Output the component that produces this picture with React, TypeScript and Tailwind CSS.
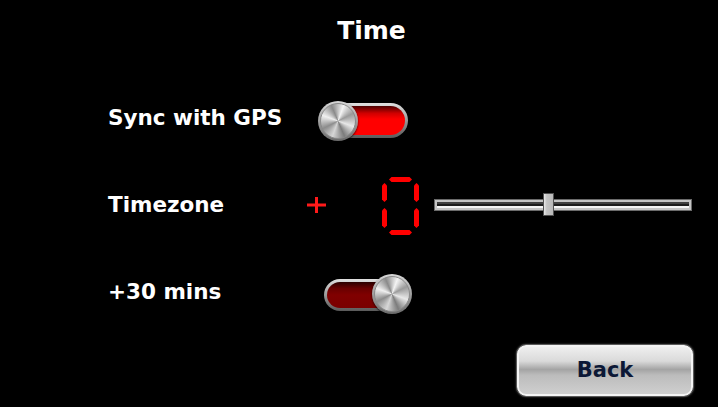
import type React from "react"

const Knob: React.FC = () => (
  <div className="w-[40px] h-[40px] rounded-full p-[2px] bg-[linear-gradient(180deg,#d8d8d8,#6a6a6a)] shadow-[0_1px_2px_rgba(0,0,0,0.8)] shrink-0">
    <div className="w-full h-full rounded-full border border-[#8a8a8a] bg-[conic-gradient(from_20deg,#f4f4f4,#9a9a9a_12%,#e8e8e8_25%,#7c7c7c_38%,#d6d6d6_50%,#8c8c8c_62%,#f0f0f0_75%,#8a8a8a_88%,#f4f4f4)]" />
  </div>
)

const Toggle: React.FC<{ on: boolean }> = ({ on }) => (
  <div className="relative w-[94px] h-[44px] flex items-center mt-[5px]">
    <div
      className={
        on
          ? "ml-[2px] w-[88px] h-[35px] rounded-full p-[3px] bg-[linear-gradient(180deg,#e0e0e0,#8c8c8c_60%,#5a5a5a)]"
          : "ml-[6px] w-[86px] h-[32px] rounded-full p-[3px] bg-[linear-gradient(180deg,#e0e0e0,#8c8c8c_60%,#5a5a5a)]"
      }
    >
      <div
        className={
          on
            ? "w-full h-full rounded-full bg-[linear-gradient(180deg,#4a0000,#d00000_25%,#ff0000_45%,#ff0000)]"
            : "w-full h-full rounded-full bg-[linear-gradient(180deg,#2a0000,#6a0000_25%,#800000_50%,#7a0000)]"
        }
      />
    </div>
    <div className={on ? "absolute left-0 top-[2px]" : "absolute left-[54px] top-[1px]"}>
      <Knob />
    </div>
  </div>
)

const Plus: React.FC = () => (
  <svg width="19" height="16" viewBox="0 0 19 16" className="shrink-0">
    <rect x="0" y="6.5" width="19" height="3" fill="#ff1a1a" />
    <rect x="8" y="0" width="3" height="16" fill="#ff1a1a" />
  </svg>
)

const Digit0: React.FC = () => {
  const h = (y: number) => `7,${y + 2.5} 9.5,${y} 27.5,${y} 30,${y + 2.5} 27.5,${y + 5} 9.5,${y + 5}`
  const v = (x: number, y1: number, y2: number) =>
    `${x + 2.5},${y1} ${x + 5},${y1 + 2.5} ${x + 5},${y2 - 2.5} ${x + 2.5},${y2} ${x},${y2 - 2.5} ${x},${y1 + 2.5}`
  return (
    <svg width="37" height="58" viewBox="0 0 37 58" className="shrink-0">
      <g fill="#ff0000">
        <polygon points={h(0)} />
        <polygon points={h(53)} />
        <polygon points={v(0, 6, 25)} />
        <polygon points={v(0, 31, 51)} />
        <polygon points={v(32, 6, 25)} />
        <polygon points={v(32, 31, 51)} />
      </g>
    </svg>
  )
}

const Slider: React.FC = () => (
  <div className="relative w-[258px] h-[24px] flex items-center">
    <div className="w-full h-[12px] border border-[#6a6a6a] bg-[#c4c4c4] px-[2px] py-[2px]">
      <div className="w-full h-full border-t-2 border-[#404040] bg-[#1c1c1c] border-b-2 border-b-[#f4f4f4]" />
    </div>
    <div className="absolute left-[109px] top-[0px] w-[11px] h-[23px] border border-[#505050] bg-[linear-gradient(90deg,#e8e8e8,#c4c4c4_30%,#b8b8b8)]" />
  </div>
)

export default function App() {
  return (
    <div
      className="w-[718px] h-[407px] bg-black text-white font-bold overflow-hidden"
      style={{ fontFamily: '"DejaVu Sans", Verdana, sans-serif' }}
    >
      <div className="h-[59px] pt-[3px] flex items-center justify-center pl-[25px] text-[25px]">Time</div>
      <div className="pt-[14px] pl-[108px] text-[21.5px]">
        <div className="h-[87px] pt-[3px] flex items-center">
          <div className="w-[210px]">Sync with GPS</div>
          <Toggle on={true} />
        </div>
        <div className="h-[87px] pt-[3px] flex items-center">
          <div className="w-[199px]">Timezone</div>
          <Plus />
          <div className="ml-[56px] mt-[1px]">
            <Digit0 />
          </div>
          <div className="ml-[15px] mt-[0px]">
            <Slider />
          </div>
        </div>
        <div className="h-[87px] pt-[3px] flex items-center">
          <div className="w-[210px]">+30 mins</div>
          <Toggle on={false} />
        </div>
      </div>
      <div className="flex justify-end pr-[24px] mt-[10px]">
        <button className="w-[178px] h-[53px] rounded-[10px] border border-[#5a5a5a] p-0 shadow-[0_0_2px_rgba(255,255,255,0.3)]">
          <div className="w-full h-full rounded-[9px] border-2 border-[#f4f4f4] bg-[linear-gradient(180deg,#efefef,#dadada_30%,#a4a4a4_48%,#bcbcbc_60%,#cfcfcf_100%)] flex items-center justify-center text-[21px] text-[#0c1836]">
            Back
          </div>
        </button>
      </div>
    </div>
  )
}
